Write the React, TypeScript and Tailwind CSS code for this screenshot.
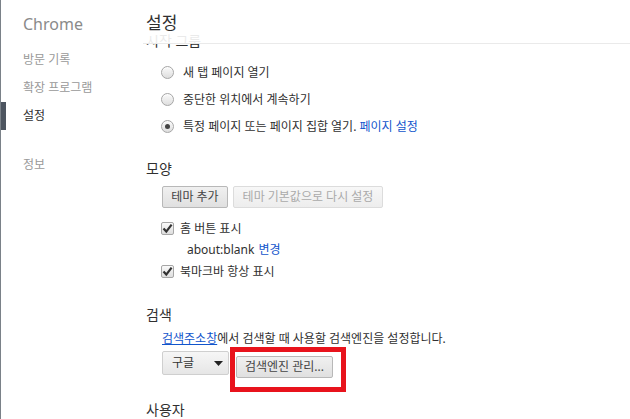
import { ReactNode } from "react";

const font = { fontFamily: '"Noto Sans", "Noto Sans CJK KR", sans-serif' };

const NavItem = ({ label, active = false }: { label: string; active?: boolean }) => (
  <div className="flex h-[28px] items-center">
    <span className={`h-full w-[5px] ${active ? "bg-[#4d5560]" : ""}`} />
    <span className={`pl-[17px] text-[12px] ${active ? "text-[#303030]" : "text-[#999]"}`}>{label}</span>
  </div>
);

const Radio = ({ checked = false, children }: { checked?: boolean; children: ReactNode }) => (
  <div className="flex h-[27px] items-center">
    <span className="flex h-[13px] w-[13px] items-center justify-center rounded-full border border-[#a6a6a6] bg-gradient-to-b from-[#fafafa] to-[#dedede] shadow-[inset_0_1px_1px_rgba(255,255,255,0.8)]">
      {checked && <span className="h-[5px] w-[5px] rounded-full bg-[#444]" />}
    </span>
    <span className="ml-[9px] text-[12px] text-[#303030]">{children}</span>
  </div>
);

const Check = ({ children, h }: { children: ReactNode; h: string }) => (
  <div className={`flex items-center ${h}`}>
    <span className="flex h-[13px] w-[13px] items-center justify-center rounded-[2px] border border-[#a6a6a6] bg-gradient-to-b from-[#fafafa] to-[#dedede]">
      <svg width="11" height="11" viewBox="0 0 11 11">
        <path d="M1.5 5.5 L4.3 8.6 L9.6 1.6" fill="none" stroke="#333" strokeWidth="2.2" />
      </svg>
    </span>
    <span className="ml-[6px] text-[12px] text-[#303030]">{children}</span>
  </div>
);

const Title = ({ children, className = "" }: { children: ReactNode; className?: string }) => (
  <div className={`flex h-[20px] items-center text-[14px] text-[#303030] ${className}`}>{children}</div>
);

export default function App() {
  return (
    <div className="flex h-[419px] w-[630px] overflow-hidden border-l border-[#7a8188] bg-white" style={font}>
      <aside className="w-[142px] shrink-0">
        <div className="flex h-[46px] items-center pl-[22px] pt-[2px] text-[16px] text-[#8a8a8a]">Chrome</div>
        <NavItem label="방문 기록" />
        <NavItem label="확장 프로그램" />
        <NavItem label="설정" active />
        <div className="mt-[21px]">
          <NavItem label="정보" />
        </div>
      </aside>

      <main className="relative flex-1 pl-[3px]">
        <div className="absolute left-0 right-0 top-0 z-10 flex h-[44px] items-center border-b border-[#eaeaea] bg-white/90 pl-[3px] pt-[2px] text-[17px] text-[#303030]">
          설정
        </div>

        <div className="pt-[30px]">
          <Title>시작 그룹</Title>
          <div className="ml-[15px] mt-[9px]">
            <Radio>새 탭 페이지 열기</Radio>
            <Radio>중단한 위치에서 계속하기</Radio>
            <Radio checked>
              특정 페이지 또는 페이지 집합 열기. <span className="text-[#1155cc]">페이지 설정</span>
            </Radio>
          </div>

          <Title className="mt-[18px]">모양</Title>
          <div className="ml-[16px] mt-[8px] flex gap-[5px]">
            <button className="h-[22px] w-[66px] rounded-[2px] border border-[#b8b8b8] bg-gradient-to-b from-[#f0f0f0] to-[#e0e0e0] text-[12px] text-[#444]">
              테마 추가
            </button>
            <button className="h-[22px] w-[150px] rounded-[2px] border border-[#dcdcdc] bg-gradient-to-b from-[#f7f7f7] to-[#ededed] text-[12px] text-[#aaa]">
              테마 기본값으로 다시 설정
            </button>
          </div>
          <div className="ml-[15px] mt-[10px]">
            <Check h="h-[21px]">홈 버튼 표시</Check>
            <div className="flex h-[22px] items-center pl-[26px] text-[12px] text-[#303030]">
              about:blank <span className="ml-[4px] text-[#1155cc]">변경</span>
            </div>
            <Check h="h-[21px]">북마크바 항상 표시</Check>
          </div>

          <Title className="mt-[22px]">검색</Title>
          <div className="ml-[16px] mt-[5px] flex h-[20px] items-center text-[12px] text-[#303030]">
            <span className="text-[#1155cc] underline">검색주소창</span>에서 검색할 때 사용할 검색엔진을 설정합니다.
          </div>
          <div className="ml-[16px] mt-[2px] flex items-start gap-[7px]">
            <div className="flex h-[24px] w-[67px] items-center justify-between rounded-[2px] border border-[#cfcfcf] bg-gradient-to-b from-[#f6f6f6] to-[#e6e6e6] pl-[9px] pr-[5px] text-[12px] text-[#333]">
              <span>구글</span>
              <svg width="9" height="5" viewBox="0 0 9 5">
                <path d="M0 0 H9 L4.5 5 Z" fill="#222" />
              </svg>
            </div>
            <div className="relative mt-[2px]">
              <button className="h-[22px] w-[97px] rounded-[2px] border border-[#b8b8b8] bg-gradient-to-b from-[#f0f0f0] to-[#e0e0e0] text-[12px] text-[#444]">
                검색엔진 관리...
              </button>
              <div className="pointer-events-none absolute -bottom-[14px] -left-[6px] -right-[13px] -top-[6px] border-[5px] border-[#e8131c]" />
            </div>
          </div>

          <Title className="mt-[21px]">사용자</Title>
        </div>
      </main>
    </div>
  );
}
